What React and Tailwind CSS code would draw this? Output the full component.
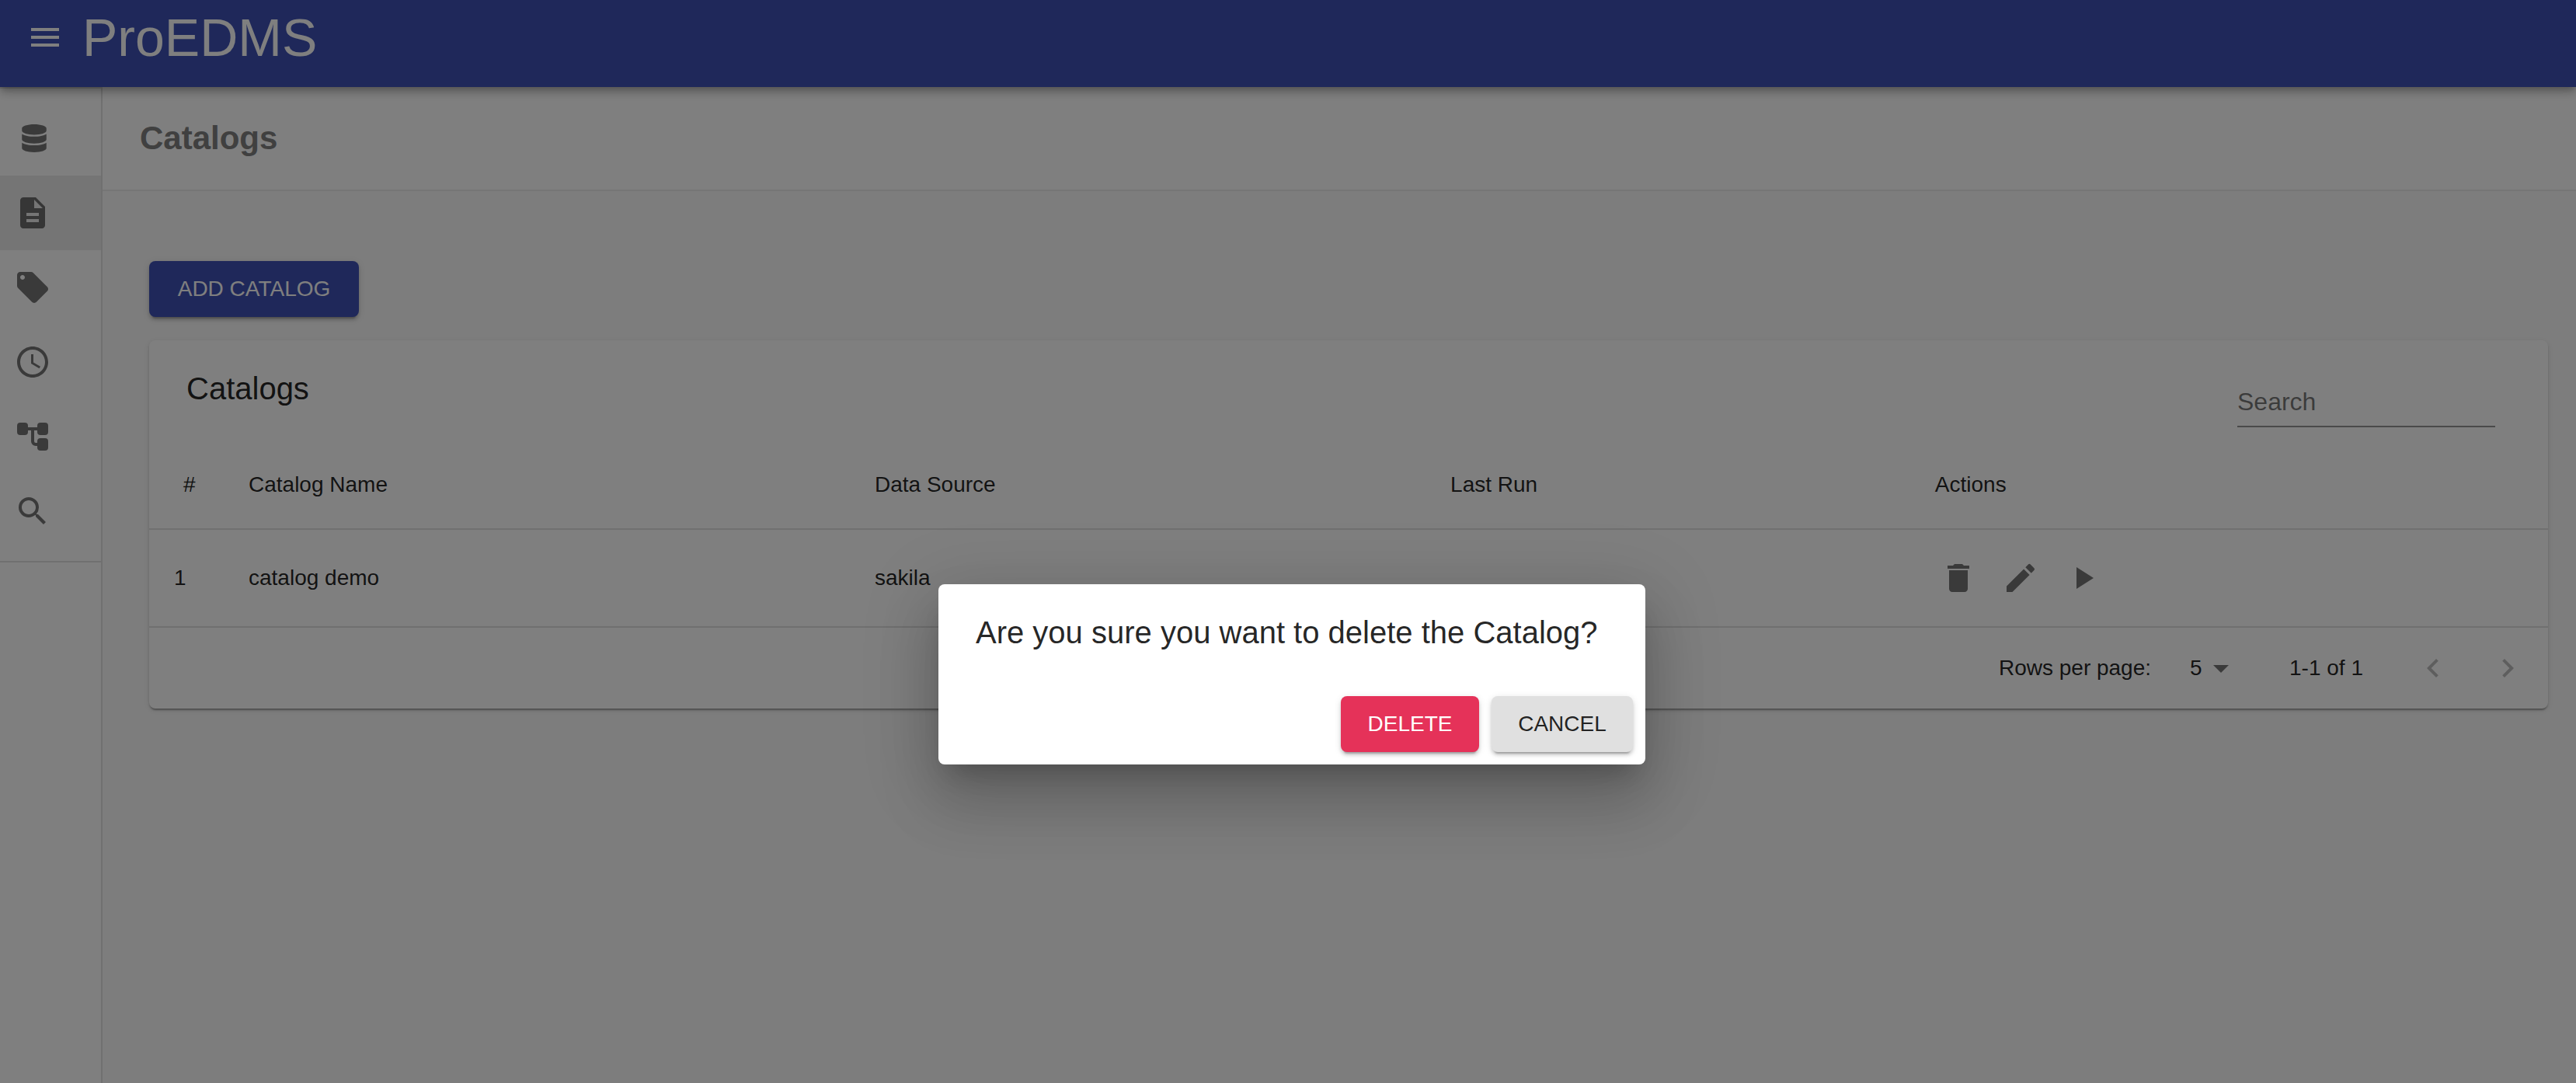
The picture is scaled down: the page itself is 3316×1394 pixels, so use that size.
import { FaDatabase } from "react-icons/fa";
import {
  MdAccessTime,
  MdArrowDropDown,
  MdChevronLeft,
  MdChevronRight,
  MdDelete,
  MdDescription,
  MdEdit,
  MdLocalOffer,
  MdMenu,
  MdPlayArrow,
  MdSearch,
} from "react-icons/md";

function TreeIcon({ className }) {
  return (
    <svg viewBox="0 0 24 24" fill="currentColor" className={className} aria-hidden="true">
      <rect x="2" y="3" width="7" height="8" rx="2" />
      <rect x="15" y="3" width="7" height="8" rx="2" />
      <rect x="15" y="13" width="7" height="8" rx="2" />
      <path d="M9 7h6M12 7v8a2 2 0 0 0 2 2h1" fill="none" stroke="currentColor" strokeWidth="2" />
    </svg>
  );
}

const navItems = [
  { label: "Data sources", Icon: FaDatabase, size: "w-[52px] h-9" },
  { label: "Catalogs", Icon: MdDescription, size: "size-12", selected: true },
  { label: "Tags", Icon: MdLocalOffer, size: "size-12" },
  { label: "Schedule", Icon: MdAccessTime, size: "size-12" },
  { label: "Lineage", Icon: TreeIcon, size: "size-12" },
  { label: "Search", Icon: MdSearch, size: "size-12" },
];

const rowActions = [
  { label: "Delete", Icon: MdDelete },
  { label: "Edit", Icon: MdEdit },
  { label: "Run", Icon: MdPlayArrow },
];

const catalogs = [{ id: 1, name: "catalog demo", source: "sakila", lastRun: "" }];

const buttonBase =
  "h-[72px] rounded-lg text-[28px] leading-[48px] uppercase whitespace-nowrap shadow-[0_6px_2px_-4px_rgba(0,0,0,0.2),0_4px_4px_0_rgba(0,0,0,0.14),0_2px_10px_0_rgba(0,0,0,0.12)]";

function AppBar() {
  return (
    <header className="relative z-10 flex h-28 items-center gap-6 bg-[#3f51b5] pb-4 pl-[34px] text-white shadow-[0_4px_8px_-2px_rgba(0,0,0,0.2),0_8px_10px_0_rgba(0,0,0,0.14),0_2px_20px_0_rgba(0,0,0,0.12)]">
      <button type="button" aria-label="Open menu">
        <MdMenu className="size-12" />
      </button>
      <span className="text-[68px] leading-[80px]">ProEDMS</span>
    </header>
  );
}

function Sidebar() {
  return (
    <nav className="w-[132px] shrink-0 border-r-2 border-[#e0e0e0] bg-white">
      <ul className="border-y-2 border-[#e0e0e0] py-4">
        {navItems.map(({ label, Icon, size, selected }) => (
          <li key={label}>
            <a
              href="#"
              aria-label={label}
              className={
                selected
                  ? "flex h-24 items-center bg-black/8 pl-[18px] text-black/54"
                  : "flex h-24 items-center pl-[18px] text-black/54"
              }
            >
              <Icon className={size} />
            </a>
          </li>
        ))}
      </ul>
    </nav>
  );
}

function CatalogTable() {
  const cell = "border-b-2 border-[#e0e0e0] px-8 text-left font-normal";
  return (
    <table className="w-full table-fixed border-separate border-spacing-0 text-[28px] leading-[48px]">
      <colgroup>
        <col className="w-24" />
        <col className="w-[26.1%]" />
        <col className="w-[24%]" />
        <col className="w-[20.2%]" />
        <col />
      </colgroup>
      <thead>
        <tr className="h-[114px]">
          <th className="border-b-2 border-[#e0e0e0] pl-11 text-left font-normal">#</th>
          <th className={cell}>Catalog Name</th>
          <th className={cell}>Data Source</th>
          <th className={cell}>Last Run</th>
          <th className={cell}>Actions</th>
        </tr>
      </thead>
      <tbody>
        {catalogs.map((c) => (
          <tr key={c.id} className="h-[126px]">
            <td className={cell}>{c.id}</td>
            <td className={cell}>{c.name}</td>
            <td className={cell}>{c.source}</td>
            <td className={cell}>{c.lastRun}</td>
            <td className={cell}>
              <div className="flex gap-8 pl-1.5 text-black/54">
                {rowActions.map(({ label, Icon }) => (
                  <button key={label} type="button" aria-label={label}>
                    <Icon className="size-12" />
                  </button>
                ))}
              </div>
            </td>
          </tr>
        ))}
      </tbody>
    </table>
  );
}

function Pagination() {
  return (
    <div className="flex h-[104px] items-center justify-end pr-7 text-[28px] leading-[48px]">
      <label htmlFor="rows">Rows per page:</label>
      <div className="relative ml-[50px] w-16">
        <select id="rows" defaultValue="5" className="block w-full appearance-none bg-transparent">
          <option>5</option>
          <option>10</option>
          <option>25</option>
        </select>
        <MdArrowDropDown className="pointer-events-none absolute top-0 right-0 size-12 text-black/54" />
      </div>
      <span className="ml-16">1-1 of 1</span>
      <div className="ml-[66px] flex gap-12 text-black/26">
        <button type="button" disabled aria-label="Previous page">
          <MdChevronLeft className="size-12" />
        </button>
        <button type="button" disabled aria-label="Next page">
          <MdChevronRight className="size-12" />
        </button>
      </div>
    </div>
  );
}

function DeleteDialog() {
  return (
    <div className="absolute inset-0 z-20 flex items-start justify-center bg-black/50 pt-[752px] pl-[10px]">
      <div
        role="dialog"
        aria-modal="true"
        aria-labelledby="dialog-title"
        className="w-[910px] rounded-lg bg-white shadow-[0_22px_30px_-14px_rgba(0,0,0,0.2),0_48px_76px_6px_rgba(0,0,0,0.14),0_18px_92px_16px_rgba(0,0,0,0.12)]"
      >
        <h2 id="dialog-title" className="px-12 pt-[30px] pb-[34px] text-[40px] leading-[64px] whitespace-nowrap">
          Are you sure you want to delete the Catalog?
        </h2>
        <div className="flex justify-end gap-4 p-4">
          <button type="button" className={`${buttonBase} w-[178px] bg-[#e53259] text-white`}>
            Delete
          </button>
          <button type="button" className={`${buttonBase} w-[182px] bg-[#e0e0e0]`}>
            Cancel
          </button>
        </div>
      </div>
    </div>
  );
}

export default function App() {
  return (
    <div className="relative flex min-h-screen flex-col bg-[#fafafa] font-['Liberation_Sans',Arial,sans-serif] text-black/87">
      <AppBar />
      <div className="flex grow">
        <Sidebar />
        <main className="min-w-0 grow">
          <div className="flex h-[134px] items-center border-b-2 border-[#ececec] bg-white pl-12">
            <h1 className="text-[42px] leading-[64px] font-bold text-[#808080]">Catalogs</h1>
          </div>
          <div className="pt-[90px] pr-9 pl-[60px]">
            <button type="button" className={`${buttonBase} w-[270px] bg-[#3f51b5] text-white`}>
              Add Catalog
            </button>
            <section className="mt-[30px] rounded-lg bg-white shadow-[0_4px_2px_-2px_rgba(0,0,0,0.2),0_2px_2px_0_rgba(0,0,0,0.14),0_2px_6px_0_rgba(0,0,0,0.12)]">
              <div className="flex h-[130px] items-start justify-between pr-[68px] pl-12">
                <h2 className="pt-[30px] text-[40px] leading-[64px]">Catalogs</h2>
                <input
                  type="text"
                  aria-label="Search"
                  placeholder="Search"
                  className="mt-12 h-16 w-[332px] border-b-2 border-black/42 bg-transparent text-[32px] placeholder:text-black/54"
                />
              </div>
              <CatalogTable />
              <Pagination />
            </section>
          </div>
        </main>
      </div>
      <DeleteDialog />
    </div>
  );
}
